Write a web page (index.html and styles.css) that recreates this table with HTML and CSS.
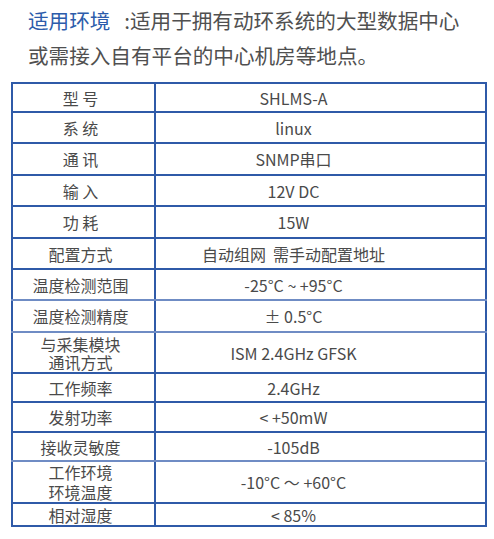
FILE: index.html
```html
<!DOCTYPE html>
<html lang="zh-CN">
<head>
<meta charset="utf-8">
<link rel="stylesheet" href="styles.css">
</head>
<body>
<div class="intro">
  <p class="line"><span class="hl">适用环境</span>&nbsp;&nbsp;&nbsp;:适用于拥有动环系统的大型数据中心</p>
  <p class="line">或需接入自有平台的中心机房等地点。</p>
</div>
<table class="spec">
  <colgroup><col class="c1"><col class="c2"></colgroup>
  <tr class="h29"><td class="k">型&nbsp;号</td><td class="v">SHLMS-A</td></tr>
  <tr class="h31"><td class="k">系&nbsp;统</td><td class="v">linux</td></tr>
  <tr class="h32"><td class="k">通&nbsp;讯</td><td class="v">SNMP串口</td></tr>
  <tr class="h31"><td class="k">输&nbsp;入</td><td class="v">12V DC</td></tr>
  <tr class="h32"><td class="k">功&nbsp;耗</td><td class="v">15W</td></tr>
  <tr class="h31"><td class="k">配置方式</td><td class="v">自动组网&nbsp;&nbsp;需手动配置地址</td></tr>
  <tr class="h31 thin"><td class="k">温度检测范围</td><td class="v">-25°C ~ +95°C</td></tr>
  <tr class="h32 thin"><td class="k">温度检测精度</td><td class="v">± 0.5°C</td></tr>
  <tr class="h41"><td class="k two">与采集模块<br>通讯方式</td><td class="v">ISM 2.4GHz GFSK</td></tr>
  <tr class="h29"><td class="k">工作频率</td><td class="v">2.4GHz</td></tr>
  <tr class="h30"><td class="k">发射功率</td><td class="v">&lt; +50mW</td></tr>
  <tr class="h29 thin"><td class="k">接收灵敏度</td><td class="v">-105dB</td></tr>
  <tr class="h41"><td class="k two2">工作环境<br>环境温度</td><td class="v">-10°C 〜 +60°C</td></tr>
  <tr class="h23"><td class="k">相对湿度</td><td class="v">&lt; 85%</td></tr>
</table>
</body>
</html>
```
FILE: styles.css
```css
html, body {
  margin: 0;
  padding: 0;
  background: #ffffff;
}
body {
  font-family: "Noto Sans CJK SC", "Noto Sans", sans-serif;
  color: #4a4a4a;
}
.intro {
  padding: 3px 0 0 28px;
}
.line {
  margin: 0;
  font-size: 20.6px;
  line-height: 35px;
  color: #505050;
  white-space: nowrap;
}
.hl {
  color: #2c5cab;
}
.spec {
  margin: 9px 0 0 11px;
  width: 474px;
  border-collapse: collapse;
  table-layout: fixed;
  font-size: 16px;
}
.c1 { width: 143px; }
.c2 { width: 331px; }
.spec td {
  border: 2px solid #2f5aa8;
  padding: 0;
  text-align: center;
  vertical-align: middle;
  line-height: 20px;
  white-space: nowrap;
}
.spec tr.thin td {
  border-bottom-color: #6f8cc4;
}
.k {
  padding-right: 6px !important;
}
.v {
  padding-right: 54px !important;
}
.two { line-height: 18px !important; }
.two2 { line-height: 20px !important; }
.h23 { height: 23px; }
.h29 { height: 29px; }
.h30 { height: 30px; }
.h31 { height: 31px; }
.h32 { height: 32px; }
.h41 { height: 41px; }
```
